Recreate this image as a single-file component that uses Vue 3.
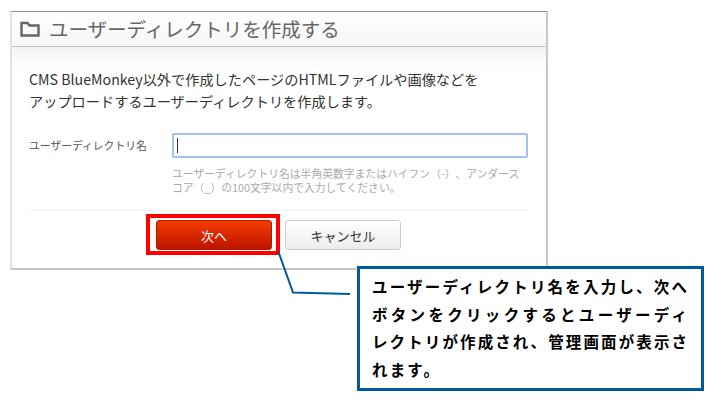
<template>
  <div class="page">
    <section class="dialog">
      <header class="head">
        <svg class="folder" width="20" height="16" viewBox="0 0 20 16">
          <path d="M1.5 2h6l2 2.5h9v10h-17z" fill="none" stroke="#666" stroke-width="2.4" />
        </svg>
        <h1>ユーザーディレクトリを作成する</h1>
      </header>
      <div class="body">
        <p class="intro">CMS BlueMonkey以外で作成したページのHTMLファイルや画像などを<br />アップロードするユーザーディレクトリを作成します。</p>
        <div class="field">
          <label>ユーザーディレクトリ名</label>
          <div class="control">
            <div class="input"><span class="caret"></span></div>
            <p class="hint">ユーザーディレクトリ名は半角英数字またはハイフン（-）、アンダース<br />コア（_）の100文字以内で入力してください。</p>
          </div>
        </div>
        <div class="actions">
          <button class="btn next">次へ</button>
          <button class="btn cancel">キャンセル</button>
        </div>
      </div>
    </section>
    <div class="mark"></div>
    <svg class="line" width="80" height="60" viewBox="0 0 80 60">
      <path d="M0.5 1L15 41.5L72 43" fill="none" stroke="#005a9c" stroke-width="2" />
    </svg>
    <aside class="callout">
      <div v-for="row in rows" :key="row" class="row">{{ row }}</div>
      <div class="row last">れます。</div>
    </aside>
  </div>
</template>

<script setup>
const rows = [
  'ユーザーディレクトリ名を入力し、次へ',
  'ボタンをクリックするとユーザーディ',
  'レクトリが作成され、管理画面が表示さ',
]
</script>

<style>
html, body { margin: 0; background: #fff; }
</style>

<style scoped>
.page {
  position: relative;
  width: 726px;
  height: 408px;
  padding: 11px 0 0 10px;
  box-sizing: border-box;
  overflow: hidden;
  background: #fff;
  font-family: "Noto Sans CJK JP", "Liberation Sans", sans-serif;
  text-spacing-trim: space-all;
}
.dialog {
  width: 538px;
  height: 259px;
  box-sizing: border-box;
  border: 2px solid #c8c8c8;
  border-top: 1px solid #8f8f8f;
  border-left-color: #e2e2e2;
  background: #fff;
}
.head {
  height: 34px;
  display: flex;
  align-items: center;
  gap: 9px;
  padding-left: 8px;
  border-bottom: 1px solid #c4c4c4;
  background: linear-gradient(#fff, #f6f6f6);
}
.folder { flex: none; }
h1 {
  margin: -2px 0 0;
  font-size: 19.5px;
  font-weight: 400;
  color: #666;
  white-space: nowrap;
}
.body {
  padding: 21px 18px 0 17px;
  background: linear-gradient(#f3f3f3, #fff 24px);
  height: 221px;
  box-sizing: border-box;
}
.intro {
  margin: 0;
  font-size: 14.2px;
  line-height: 22px;
  color: #333;
  white-space: nowrap;
}
.field {
  display: flex;
  margin-top: 21px;
}
label {
  width: 143px;
  flex: none;
  font-size: 10.8px;
  line-height: 25px;
  color: #555;
  white-space: nowrap;
}
.control { flex: 1; }
.input {
  height: 25px;
  box-sizing: border-box;
  border: 2px solid #a3c0f2;
  border-radius: 2px;
  background: #fff;
  display: flex;
  align-items: center;
  padding-left: 3px;
}
.caret {
  width: 1px;
  height: 15px;
  background: #333;
}
.hint {
  margin: 8px 0 0;
  font-size: 10.8px;
  line-height: 14px;
  color: #aaa;
  white-space: nowrap;
}
.actions {
  display: flex;
  justify-content: flex-start;
  gap: 13px;
  margin-top: 16px;
  padding: 9px 0 0 127px;
  border-top: 1px solid #eee;
}
.btn {
  width: 116px;
  height: 30px;
  box-sizing: border-box;
  border-radius: 3px;
  font-family: inherit;
  font-size: 13px;
  padding: 0;
}
.next {
  border: 1px solid #a81c00;
  background: linear-gradient(#f53c00, #bb1400);
  color: #fff;
}
.cancel {
  border: 1px solid #ccc;
  background: linear-gradient(#fff, #ececec);
  color: #333;
}
.mark {
  position: absolute;
  left: 146px;
  top: 214px;
  width: 134px;
  height: 41px;
  box-sizing: border-box;
  border: 4px solid #f00;
}
.line {
  position: absolute;
  left: 278px;
  top: 251px;
}
.callout {
  position: absolute;
  left: 357px;
  top: 266px;
  width: 347px;
  height: 125px;
  box-sizing: border-box;
  border: 3px solid #005a9c;
  background: #fff;
  padding: 4px 14px 0 12px;
  font-size: 15.5px;
  font-weight: 700;
  line-height: 27.6px;
  color: #000;
}
.row {
  text-align: justify;
  text-align-last: justify;
  text-justify: inter-character;
  white-space: nowrap;
}
.row.last {
  text-align: left;
  text-align-last: left;
  letter-spacing: 2.15px;
}
</style>
